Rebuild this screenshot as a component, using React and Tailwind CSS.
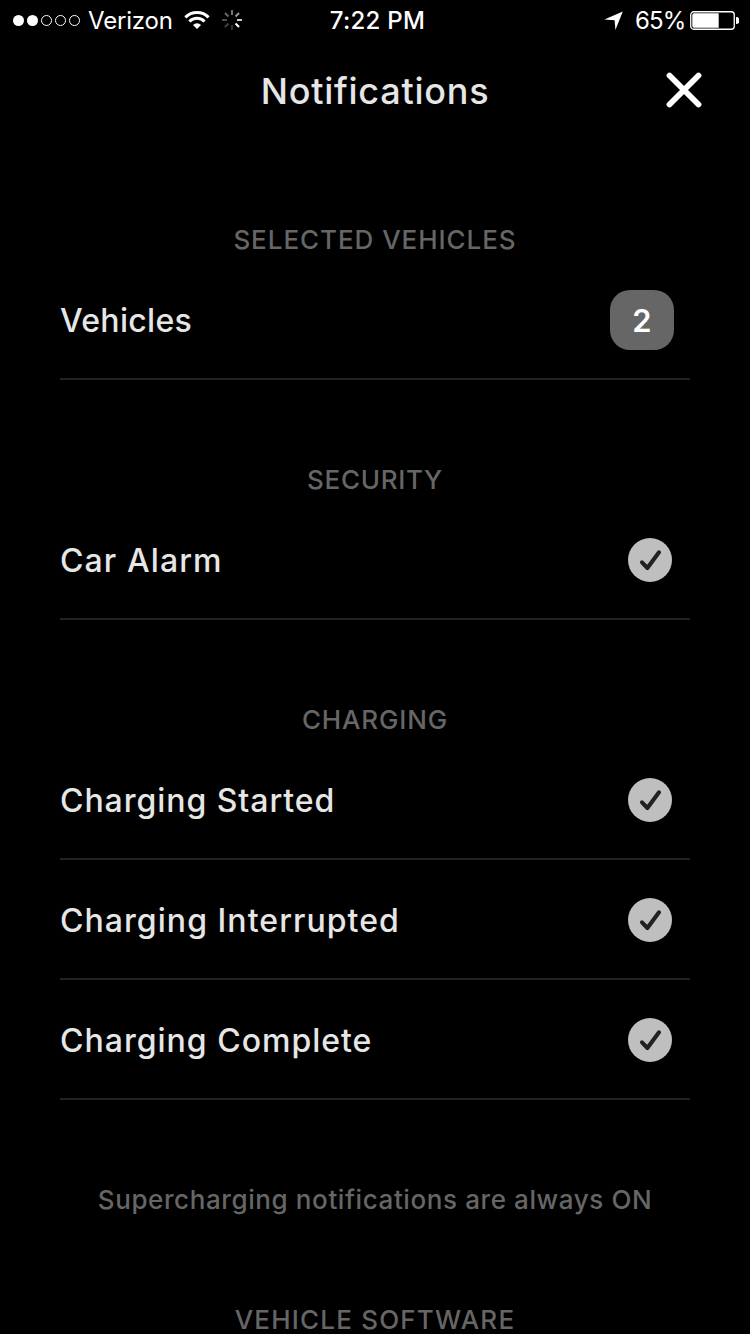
const spokes = [
    { angle: 0, opacity: 0.45 },
    { angle: 45, opacity: 0.6 },
    { angle: 90, opacity: 0.8 },
    { angle: 135, opacity: 1 },
    { angle: 180, opacity: 0.2 },
    { angle: 225, opacity: 0.25 },
    { angle: 270, opacity: 0.3 },
    { angle: 315, opacity: 0.4 },
]

export default function App() {
    return <div className="h-[1334px] w-[750px] overflow-hidden bg-black font-['Inter','Liberation_Sans',sans-serif] font-medium text-[#e6e6e6]">
        <StatusBar />
        <Header />
        <Section title="SELECTED VEHICLES" spacing="tracking-[0.95px]">
            <Row label="Vehicles" spacing="tracking-[0.3px]">
                <div className="mr-4 flex h-15 w-16 items-center justify-center rounded-[20px] bg-[#666] pt-0.5 text-[31px] font-semibold text-white">
                    2
                </div>
            </Row>
        </Section>
        <Section title="SECURITY" spacing="tracking-[0.7px]">
            <Row label="Car Alarm" spacing="tracking-[1.1px]"><Check /></Row>
        </Section>
        <Section title="CHARGING" spacing="tracking-[0.85px]">
            <Row label="Charging Started" spacing="tracking-[0.95px]"><Check /></Row>
            <Row label="Charging Interrupted" spacing="tracking-[1.05px]"><Check /></Row>
            <Row label="Charging Complete" spacing="tracking-[1px]"><Check /></Row>
        </Section>
        <Section title="Supercharging notifications are always ON" spacing="tracking-[0.6px]" />
        <Section title="VEHICLE SOFTWARE" spacing="tracking-[1.2px]" />
    </div>
}

function StatusBar() {
    return <div className="grid h-10 grid-cols-3 items-center pr-[11px] pl-3 text-2xl font-normal text-white">
        <div className="flex items-center">
            <svg width="70" height="14" viewBox="0 0 70 14" fill="none" stroke="white">
                <circle cx="6.5" cy="7.5" r="5.5" fill="white" stroke="none" />
                <circle cx="20.5" cy="7.5" r="5.5" fill="white" stroke="none" />
                <circle cx="34.5" cy="7.5" r="5" />
                <circle cx="48.5" cy="7.5" r="5" />
                <circle cx="62.5" cy="7.5" r="5" />
            </svg>
            <span className="ml-1.5 w-[96px] pt-0.5 tracking-[-0.2px]">Verizon</span>
            <svg width="26" height="20" viewBox="0 0 26 20" fill="none" stroke="white" strokeWidth="3">
                <path d="M1.4 7.4a16.2 16.2 0 0 1 23.2 0" />
                <path d="M5.4 11.5a10.6 10.6 0 0 1 15.2 0" />
                <path d="M13 19l-4-4.1a5.7 5.7 0 0 1 8 0z" fill="white" stroke="none" />
            </svg>
            <svg className="ml-3" width="20" height="20" viewBox="-10 -10 20 20" stroke="white" strokeWidth="2">
                {spokes.map(s => <path key={s.angle} d="M0-5V-10" transform={`rotate(${s.angle})`} opacity={s.opacity} />)}
            </svg>
        </div>
        <div className="pt-0.5 pl-1 text-center font-medium tracking-[0.3px]">7:22 PM</div>
        <div className="flex items-center justify-end">
            <svg width="20" height="20" viewBox="0 0 20 20" fill="white">
                <path d="M18.8 1.6L11.4 20L10.6 10.2L0.4 9.4z" />
            </svg>
            <span className="ml-[11px] w-[55px] pt-0.5 tracking-[-0.9px]">65%</span>
            <svg width="49" height="20" viewBox="0 0 49 20">
                <rect x="0.75" y="1.75" width="43.5" height="17.5" rx="3" fill="none" stroke="white" strokeWidth="1.3" />
                <path d="M4 3.3h24.7v14.4H4a1.7 1.7 0 0 1-1.7-1.7V5A1.7 1.7 0 0 1 4 3.3z" fill="white" />
                <path d="M46 7a3.5 3.5 0 0 1 0 7z" fill="white" />
            </svg>
        </div>
    </div>
}

function Header() {
    return <div className="grid h-[100px] grid-cols-[1fr_auto_1fr] items-center">
        <h1 className="col-start-2 pt-0.5 text-4xl font-medium tracking-[0.75px]">Notifications</h1>
        <button className="mr-12 justify-self-end">
            <svg width="36" height="36" viewBox="0 0 36 36" stroke="white" strokeWidth="5.8" strokeLinecap="round">
                <path d="M3.5 3.5l29 29M32.5 3.5l-29 29" />
            </svg>
        </button>
    </div>
}

function Section({ title, spacing, children }) {
    return <section>
        <h2 className={`flex h-30 items-center justify-center pt-[78px] text-[26px] font-medium whitespace-nowrap text-[#666] ${spacing}`}>
            {title}
        </h2>
        {children}
    </section>
}

function Row({ label, spacing, children }) {
    return <div className="mx-15 flex h-30 items-center justify-between border-b-2 border-[#222] pt-0.5">
        <span className={`pt-0.5 text-[32px] ${spacing}`}>{label}</span>
        {children}
    </div>
}

function Check() {
    return <svg className="mr-[18px]" width="44" height="44" viewBox="0 0 44 44">
        <circle cx="22" cy="22" r="22" fill="#bfbfbf" />
        <path d="M14 24.3l5.4 5.7L31 14.3" fill="none" stroke="#222" strokeWidth="4.1" strokeLinecap="round" strokeLinejoin="round" />
    </svg>
}
